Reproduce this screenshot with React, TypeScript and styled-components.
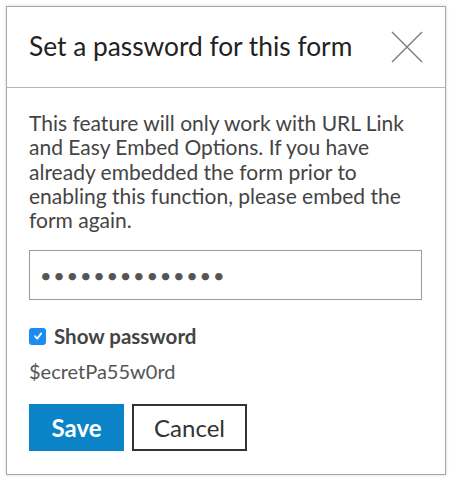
import React from "react";
import styled, { createGlobalStyle } from "styled-components";

const Global = createGlobalStyle`
  html, body { margin: 0; padding: 0; background: #fff; }
  body { font-family: Lato, "Open Sans", sans-serif; }
`;

const Page = styled.div`
  padding: 6px;
`;

const Panel = styled.div`
  width: 440px;
  height: 469px;
  box-sizing: border-box;
  border: 1px solid #a9a9a9;
  box-shadow: 0 0 3px rgba(0, 0, 0, 0.18);
  background: #fff;
  display: flex;
  flex-direction: column;
`;

const Header = styled.div`
  height: 81px;
  box-sizing: border-box;
  border-bottom: 1px solid #b5b5b5;
  display: flex;
  align-items: center;
  justify-content: space-between;
  padding: 0 22px 0 22px;
`;

const Title = styled.h1`
  margin: 0;
  font-size: 26.3px;
  font-weight: 400;
  color: #222;
  padding-bottom: 2px;
`;

const CloseButton = styled.button`
  border: 0;
  background: none;
  padding: 0;
  width: 32px;
  height: 32px;
  display: flex;
  align-items: center;
  justify-content: center;
  cursor: pointer;
`;

const Body = styled.div`
  padding: 23px 22px 0 22px;
  display: flex;
  flex-direction: column;
`;

const Description = styled.p`
  margin: 0;
  font-size: 21px;
  line-height: 24.3px;
  color: #444;
`;

const PasswordInput = styled.input`
  margin-top: 18px;
  width: 393px;
  height: 50px;
  box-sizing: border-box;
  border: 1px solid #9a9a9a;
  padding: 0 10px;
  font-family: Lato, sans-serif;
  font-size: 20px;
  letter-spacing: 1.7px;
  color: #555;
  outline: none;
`;

const CheckRow = styled.label`
  margin-top: 25px;
  display: flex;
  align-items: center;
  gap: 8px;
  font-size: 20.5px;
  line-height: 22px;
  font-weight: 700;
  color: #444;
`;

const CheckBox = styled.span`
  width: 17px;
  height: 17px;
  border-radius: 3px;
  background: #1c8cf4;
  display: flex;
  align-items: center;
  justify-content: center;
`;

const Revealed = styled.div`
  margin-top: 12px;
  font-size: 20px;
  line-height: 24px;
  color: #555;
`;

const Actions = styled.div`
  margin-top: 21px;
  display: flex;
  gap: 8px;
`;

const Button = styled.button<{ $primary?: boolean }>`
  height: 47px;
  box-sizing: border-box;
  font-family: Lato, sans-serif;
  font-size: 24px;
  padding: 0;
  cursor: pointer;
  ${(p) =>
    p.$primary
      ? `width: 95px; background: #0a84c7; color: #fff; font-weight: 700; border: 0;`
      : `width: 115px; background: #fff; color: #333; font-weight: 400; border: 2px solid #333;`}
`;

export default function App() {
  return (
    <Page>
      <Global />
      <Panel>
        <Header>
          <Title>Set a password for this form</Title>
          <CloseButton aria-label="Close">
            <svg width="32" height="32" viewBox="0 0 32 32">
              <path d="M1 1 L31 31 M31 1 L1 31" stroke="#7a7a7a" strokeWidth="1.4" fill="none" />
            </svg>
          </CloseButton>
        </Header>
        <Body>
          <Description>
            This feature will only work with URL Link and Easy Embed Options. If you have
            already embedded the form prior to enabling this function, please embed the
            form again.
          </Description>
          <PasswordInput type="password" readOnly value="$ecretPa55w0rd" />
          <CheckRow>
            <CheckBox>
              <svg width="10" height="10" viewBox="0 0 10 10">
                <path d="M2 5.2 L4.2 7.6 L8.2 2.4" stroke="#fff" strokeWidth="1.8" fill="none" strokeLinecap="round" strokeLinejoin="round" />
              </svg>
            </CheckBox>
            Show password
          </CheckRow>
          <Revealed>$ecretPa55w0rd</Revealed>
          <Actions>
            <Button $primary>Save</Button>
            <Button>Cancel</Button>
          </Actions>
        </Body>
      </Panel>
    </Page>
  );
}
